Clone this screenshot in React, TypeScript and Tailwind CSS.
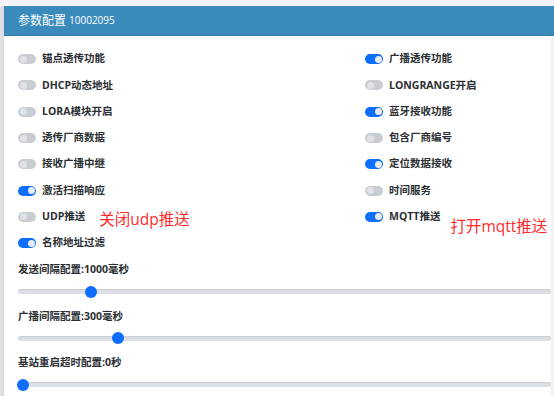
import React from "react"

type Item = { label: string; on: boolean; note?: string }

const leftItems: Item[] = [
  { label: "锚点透传功能", on: false },
  { label: "DHCP动态地址", on: false },
  { label: "LORA模块开启", on: false },
  { label: "透传厂商数据", on: false },
  { label: "接收广播中继", on: false },
  { label: "激活扫描响应", on: true },
  { label: "UDP推送", on: false, note: "关闭udp推送" },
  { label: "名称地址过滤", on: true },
]

const rightItems: Item[] = [
  { label: "广播透传功能", on: true },
  { label: "LONGRANGE开启", on: false },
  { label: "蓝牙接收功能", on: true },
  { label: "包含厂商编号", on: false },
  { label: "定位数据接收", on: true },
  { label: "时间服务", on: false },
  { label: "MQTT推送", on: true, note: "打开mqtt推送" },
]

const sliders = [
  { label: "发送间隔配置:1000毫秒", pos: 73 },
  { label: "广播间隔配置:300毫秒", pos: 100 },
  { label: "基站重启超时配置:0秒", pos: 5 },
]

const Toggle = ({ on }: { on: boolean }) => (
  <div
    className={
      on
        ? "w-[18px] h-[10px] rounded-full bg-[#0d6efd] flex items-center justify-end px-[1.5px]"
        : "w-[18px] h-[10px] rounded-full bg-[#c9cdd2] flex items-center justify-start px-[1.5px]"
    }
  >
    <div className={on ? "w-[7px] h-[7px] rounded-full bg-[#e8ecf2]" : "w-[7px] h-[7px] rounded-full bg-[#dfe2e6]"} />
  </div>
)

const Row = ({ item }: { item: Item }) => (
  <div className="h-[26.3px] flex items-center">
    <Toggle on={item.on} />
    <span className="ml-[6px] text-[10.5px] font-bold text-[#2b2f33]">{item.label}</span>
    {item.note && (
      <span
        className={
          item.label === "MQTT推送"
            ? "ml-[10px] relative top-[10px] text-[15.5px] text-[#ff2b2b]"
            : "ml-[14px] relative top-[3px] text-[15.5px] text-[#ff2b2b]"
        }
      >
        {item.note}
      </span>
    )}
  </div>
)

export default function App() {
  return (
    <div className="w-[554px] h-[396px] overflow-hidden bg-[#f2f3f6] pt-[6px] font-['Open_Sans','Noto_Sans_CJK_SC',sans-serif]">
      <div className="flex h-full">
        <div className="w-[4px] bg-gradient-to-r from-[#e3e4e7] to-[#d6d8db]" />
        <div className="flex-1 flex flex-col bg-white min-h-0">
          {/* header */}
          <div className="shrink-0 h-[30px] bg-[#3a8bbb] border-b border-[#2f7aa8] flex items-center pl-[14px]">
            <span className="text-white text-[12px]">参数配置</span>
            <span className="text-white text-[10px] ml-[3px]">10002095</span>
          </div>
          <div className="flex flex-1 min-h-0">
            <div className="flex-1 pl-[14px]">
              {/* switches */}
              <div className="grid grid-cols-[347px_1fr] pt-[10px]">
                <div>
                  {leftItems.map((it) => (
                    <Row key={it.label} item={it} />
                  ))}
                </div>
                <div>
                  {rightItems.map((it) => (
                    <Row key={it.label} item={it} />
                  ))}
                </div>
              </div>
              {/* sliders */}
              <div className="mt-[5px]">
                {sliders.map((s) => (
                  <div key={s.label} className="h-[46.5px]">
                    <div className="text-[10.5px] font-bold text-[#2b2f33] h-[16px] leading-[16px]">{s.label}</div>
                    <div className="relative h-[11px] mt-[9px] flex items-center">
                      <div className="w-full h-[5px] rounded-full bg-[#dcdfe3] shadow-[inset_0_1px_1px_rgba(0,0,0,0.08)]" />
                      <div
                        className="absolute w-[12px] h-[12px] rounded-full bg-[#0d6efd]"
                        style={{ left: s.pos - 6 + "px" }}
                      />
                    </div>
                  </div>
                ))}
              </div>
            </div>
            <div className="w-[3px] bg-[#f1f2f4]" />
          </div>
        </div>
      </div>
    </div>
  )
}
